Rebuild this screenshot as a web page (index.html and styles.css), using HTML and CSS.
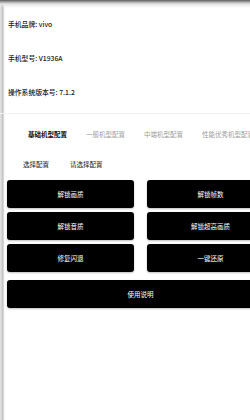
FILE: index.html
```html
<!DOCTYPE html>
<html lang="zh-CN">

<head>
  <meta charset="UTF-8">
  <meta name="viewport" content="width=device-width, initial-scale=1.0">
  <title>画质助手</title>
  <link rel="stylesheet" href="styles.css">
</head>

<body>
  <div class="screen">
    <div class="info">
      <p>手机品牌: vivo</p>
      <p>手机型号: V1936A</p>
      <p>操作系统版本号: 7.1.2</p>
    </div>

    <div class="tabs">
      <span class="tab active">基础机型配置</span>
      <span class="tab">一般机型配置</span>
      <span class="tab">中端机型配置</span>
      <span class="tab">性能优秀机型配置</span>
    </div>

    <div class="select-row">
      <span>选择配置</span>
      <span>请选择配置</span>
    </div>

    <div class="actions">
      <button>解锁画质</button>
      <button>解锁帧数</button>
      <button>解锁音质</button>
      <button>解锁超高画质</button>
      <button>修复闪退</button>
      <button>一键还原</button>
      <button class="wide">使用说明</button>
    </div>
  </div>
</body>

</html>
```

FILE: styles.css
```css
html,
body {
  margin: 0;
  height: 100%;
  overflow: hidden;
}

body {
  font-family: 'Noto Sans CJK SC', 'Noto Sans', sans-serif;
  background:
    linear-gradient(to bottom, #5a5a5a 0, #a8a8a8 2px, #e4e4e4 4px, rgba(255, 255, 255, 0) 8px) no-repeat top left / 100% 8px,
    linear-gradient(to right, #e6e6e6 0, #cfcfcf 2px, #bdbdbd 3px, #f2f2f2 4px, rgba(255, 255, 255, 0) 5px) no-repeat top left / 6px 100%,
    #fff;
}

.screen {
  width: 290px;
}

.info {
  padding-top: 7px;
}

.info p {
  margin: 0;
  height: 34px;
  line-height: 34px;
  padding-left: 8px;
  font-size: 6.8px;
  color: #1a1a1a;
  font-weight: 500;
}

.tabs {
  margin-top: 4px;
  border-top: 1px solid #f3f3f3;
  height: 40px;
  display: flex;
  align-items: center;
  gap: 19px;
  padding-left: 28px;
  white-space: nowrap;
}

.tab {
  font-size: 6.5px;
  color: #a0a0a0;
}

.tab.active {
  color: #111;
  font-weight: bold;
}

.select-row {
  height: 20px;
  display: flex;
  align-items: center;
  gap: 21px;
  padding-left: 23px;
  font-size: 6.5px;
  color: #222;
}

.actions {
  margin-top: 6px;
  padding-left: 7px;
  display: grid;
  grid-template-columns: 127px 127px;
  column-gap: 13px;
  row-gap: 4px;
}

.actions button {
  height: 28px;
  background: #000;
  color: #fff;
  border: none;
  border-radius: 3px;
  font-family: inherit;
  font-size: 6.5px;
  padding: 0;
  box-shadow: 0 1px 2px rgba(0, 0, 0, 0.25);
}

.actions .wide {
  grid-column: 1 / 3;
  margin-top: 4px;
}
```
